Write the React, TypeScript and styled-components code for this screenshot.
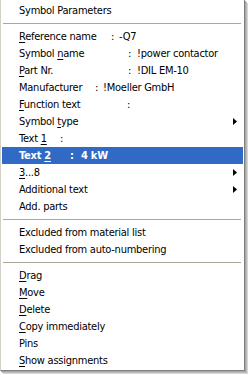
import styled, { createGlobalStyle } from "styled-components";

const Global = createGlobalStyle`
  html, body {
    margin: 0;
    padding: 0;
    background: #ffffff;
  }
  body {
    width: 248px;
    height: 375px;
    overflow: hidden;
  }
`;

type Entry =
  | { kind: "sep" }
  | {
      kind: "item";
      label: string;
      key?: number;
      colonAt?: number;
      gap?: number;
      value?: string;
      sub?: boolean;
      active?: boolean;
    };

const entries: Entry[] = [
  { kind: "item", label: "Symbol Parameters" },
  { kind: "sep" },
  { kind: "item", label: "Reference name", key: 0, colonAt: 92, gap: 8, value: "-Q7" },
  { kind: "item", label: "Symbol name", key: 7, colonAt: 109, gap: 9, value: "!power contactor" },
  { kind: "item", label: "Part Nr.", key: 0, colonAt: 109, gap: 9, value: "!DIL EM-10" },
  { kind: "item", label: "Manufacturer", colonAt: 76, gap: 8, value: "!Moeller GmbH" },
  { kind: "item", label: "Function text", key: 0, colonAt: 108, gap: 8, value: "" },
  { kind: "item", label: "Symbol type", key: 7, sub: true },
  { kind: "item", label: "Text 1", key: 5, colonAt: 41, gap: 8, value: "" },
  { kind: "item", label: "Text 2", key: 5, colonAt: 51, gap: 11, value: "4 kW", active: true },
  { kind: "item", label: "3...8", key: 0, sub: true },
  { kind: "item", label: "Additional text", sub: true },
  { kind: "item", label: "Add. parts" },
  { kind: "sep" },
  { kind: "item", label: "Excluded from material list" },
  { kind: "item", label: "Excluded from auto-numbering" },
  { kind: "sep" },
  { kind: "item", label: "Drag", key: 0 },
  { kind: "item", label: "Move", key: 0 },
  { kind: "item", label: "Delete", key: 0 },
  { kind: "item", label: "Copy immediately", key: 0 },
  { kind: "item", label: "Pins" },
  { kind: "item", label: "Show assignments", key: 0 },
];

function Label({ text, index }: { text: string; index?: number }) {
  if (index === undefined) return <>{text}</>;
  return (
    <>
      {text.slice(0, index)}
      <Key>{text[index]}</Key>
      {text.slice(index + 1)}
    </>
  );
}

export default function App() {
  return (
    <>
      <Global />
      <Menu>
        {entries.map((e, i) =>
          e.kind === "sep" ? (
            <Separator key={i} />
          ) : (
            <Item key={i} $active={e.active}>
              {e.colonAt !== undefined ? (
                <>
                  <Name $w={e.colonAt}>
                    <Label text={e.label} index={e.key} />
                  </Name>
                  <Colon $w={e.gap ?? 8}>:</Colon>
                  <span>{e.value}</span>
                </>
              ) : (
                <span>
                  <Label text={e.label} index={e.key} />
                </span>
              )}
              {e.sub && (
                <Arrow width="4" height="7" viewBox="0 0 4 7">
                  <path d="M0 0 L4 3.5 L0 7 Z" fill="#000" />
                </Arrow>
              )}
            </Item>
          )
        )}
      </Menu>
    </>
  );
}

const Menu = styled.div`
  width: 241px;
  box-sizing: content-box;
  background: #ffffff;
  border-left: 1px solid #d4d0c8;
  border-right: 1px solid #808080;
  border-bottom: 1px solid #808080;
  padding: 2px 1px 1px 1px;
  box-shadow: 1px 1px 0 #a6a6a6, 2px 2px 0 #bdbdbd, 3px 3px 0 #d6d6d6;
  font-family: "DejaVu Sans Condensed", "DejaVu Sans", sans-serif;
  font-size: 11px;
  letter-spacing: -0.25px;
  color: #000000;
`;

const Item = styled.div<{ $active?: boolean }>`
  height: 17px;
  display: flex;
  align-items: center;
  padding: 0 6px 0 17px;
  white-space: pre;
  background: ${(p) => (p.$active ? "#316ac5" : "transparent")};
  color: ${(p) => (p.$active ? "#ffffff" : "#000000")};
  font-weight: ${(p) => (p.$active ? "bold" : "normal")};
`;

const Name = styled.span<{ $w: number }>`
  display: inline-block;
  width: ${(p) => p.$w}px;
`;

const Colon = styled.span<{ $w: number }>`
  display: inline-block;
  width: ${(p) => p.$w}px;
`;

const Key = styled.u`
  text-decoration: underline;
  text-underline-offset: 2px;
`;

const Arrow = styled.svg`
  margin-left: auto;
  display: block;
`;

const Separator = styled.div`
  height: 9px;
  display: flex;
  align-items: center;
  padding: 0 0 0 1px;
  &::before {
    content: "";
    display: block;
    width: 238px;
    height: 1px;
    background: #aca899;
  }
`;
